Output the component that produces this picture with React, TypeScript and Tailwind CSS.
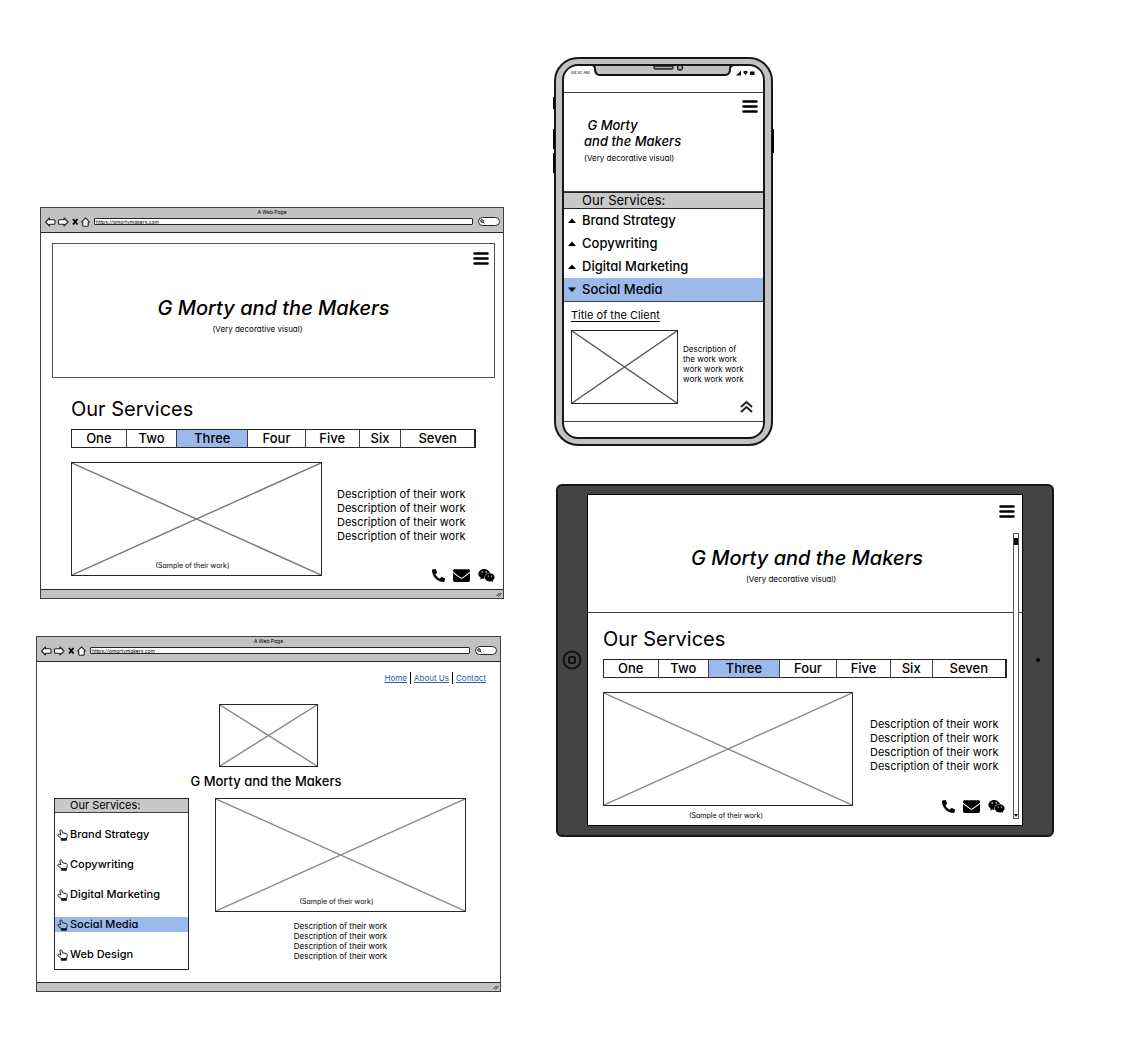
import type { ReactNode } from "react";
import { FaEnvelope, FaPhoneAlt, FaWeixin } from "react-icons/fa";

const services = ["Brand Strategy", "Copywriting", "Digital Marketing", "Social Media", "Web Design"];
const tabs = ["One", "Two", "Three", "Four", "Five", "Six", "Seven"];

function MenuButton() {
  return (
    <button type="button" aria-label="Menu" className="block">
      <svg width="16" height="13" viewBox="0 0 16 13" stroke="#000" strokeWidth="2.6" strokeLinecap="round">
        <path d="M1.5 1.5h13M1.5 6.5h13M1.5 11.5h13" />
      </svg>
    </button>
  );
}

function Placeholder({ className, line = "#777", children }: { className: string; line?: string; children?: ReactNode }) {
  return (
    <div className={`relative border border-neutral-800 ${className}`}>
      <svg className="block h-full w-full" viewBox="0 0 100 100" preserveAspectRatio="none" stroke={line} strokeWidth="1.4">
        <path d="M0 0L100 100M100 0L0 100" vectorEffect="non-scaling-stroke" />
      </svg>
      {children}
    </div>
  );
}

function Hand() {
  return (
    <svg width="11" height="12" viewBox="0 0 22 24" fill="none" stroke="#222" strokeWidth="2" strokeLinejoin="round" className="shrink-0">
      <path d="M7.500 12L5.800 4C5.500 1.500 9 1 9.800 3.200L11 7.500L18 9C20 9.600 20.800 10.700 20.500 12.500L19 19H8.500L1.800 13.500C0.600 11.500 2.500 9.800 4.600 10.800L7.500 12" />
      <path d="M8.500 19h10.500v3.500H8.500z" fill="#111" />
    </svg>
  );
}

function Browser({ className, children }: { className: string; children: ReactNode }) {
  return (
    <section className={`border border-neutral-700 bg-white ${className}`}>
      <header className="h-[25px] border-b border-neutral-800 bg-[#c2c2c2]">
        <p className="h-[9px] text-center text-[5px] leading-[8px]">A Web Page</p>
        <div className="flex h-[9px] items-center pr-[3px] pl-1">
          <svg width="46" height="10" viewBox="0 0 46 10" fill="#fff" stroke="#222" strokeWidth="1.1" strokeLinejoin="round" className="shrink-0">
            <path d="M0.600 5L4.500 1v1.800h4.500q1 0 1 1v2.400q0 1-1 1H4.500V9z" />
            <path d="M23 5L19 1v1.800h-4.500q-1 0-1 1v2.400q0 1 1 1H19V9z" />
            <path d="M28 2l4.500 5.500M32.500 2l-4.500 5.500" stroke="#000" strokeWidth="1.800" />
            <path d="M40.500 0.800L44.400 5h-1.200v3.200q0 1-1 1h-3.400q-1 0-1-1V5h-1.200z" />
          </svg>
          <input
            aria-label="Address"
            defaultValue="https://gmortymakers.com"
            className="ml-[3px] h-[7px] min-w-0 flex-1 rounded-[1px] border border-neutral-800 bg-white px-px text-[5px] leading-[5px]"
          />
          <label className="ml-[5px] flex h-[9px] w-[22px] shrink-0 items-center rounded-full border border-neutral-800 bg-white pl-px">
            <svg width="5" height="5" viewBox="0 0 5 5" fill="none" stroke="#111" strokeWidth="1" className="shrink-0">
              <circle cx="2" cy="2" r="1.300" />
              <path d="M3 3l1.500 1.500" />
            </svg>
            <input aria-label="Search" className="h-[5px] w-full min-w-0 text-[5px] outline-none" />
          </label>
        </div>
      </header>
      {children}
      <footer className="flex h-[9px] items-center justify-end border-t border-neutral-800 bg-[#c2c2c2] pr-px">
        <svg width="6" height="5" viewBox="0 0 6 5" stroke="#222" strokeWidth="1">
          <path d="M0.500 4l3-3M2.500 4.500l3-3.500" />
        </svg>
      </footer>
    </section>
  );
}

function HeroText() {
  return (
    <>
      <h1 className="text-center text-[20px] leading-7 font-medium italic">G Morty and the Makers</h1>
      <p className="mt-px pr-8 text-center text-[8px] leading-3">(Very decorative visual)</p>
    </>
  );
}

function ServiceTabs({ className }: { className: string }) {
  return (
    <nav
      aria-label="Services"
      className={`grid h-[19px] grid-cols-[55fr_51fr_71fr_58fr_54fr_42fr_73fr] border border-r-2 border-neutral-800 ${className}`}
    >
      {tabs.map((tab) => (
        <button
          key={tab}
          type="button"
          className={`border-r border-neutral-700 text-[13px] leading-[17px] font-medium last:border-r-0 ${tab === "Three" ? "bg-[#9cb9ec]" : "bg-white"}`}
        >
          {tab}
        </button>
      ))}
    </nav>
  );
}

function Description({ className }: { className: string }) {
  return (
    <div className={className}>
      {[0, 1, 2, 3].map((n) => (
        <p key={n}>Description of their work</p>
      ))}
    </div>
  );
}

function ContactIcons() {
  return (
    <div className="flex h-[14px] items-center justify-end gap-2">
      <a href="#phone" aria-label="Phone">
        <FaPhoneAlt size={13} />
      </a>
      <a href="#mail" aria-label="Email">
        <FaEnvelope size={17} />
      </a>
      <a href="#wechat" aria-label="WeChat">
        <FaWeixin size={17} />
      </a>
    </div>
  );
}

function DesktopTabs() {
  return (
    <Browser className="ml-1">
      <main>
        <div className="mt-[10px] mr-2 ml-[11px] border border-neutral-600 pt-[8px] pb-[42px]">
          <div className="mb-[29px] flex justify-end pr-[5px]">
            <MenuButton />
          </div>
          <HeroText />
        </div>
        <div className="pt-[17px] pr-2 pb-[7px] pl-[30px]">
          <h2 className="text-[20px] leading-7">Our Services</h2>
          <ServiceTabs className="mt-[6px] mr-[19px]" />
          <div className="mt-[14px] grid grid-cols-[251fr_158fr] gap-[15px]">
            <Placeholder className="h-[114px]">
              <p className="absolute inset-x-0 bottom-1 pr-2 text-center text-[7px] leading-[10px]">(Sample of their work)</p>
            </Placeholder>
            <div className="pt-[25px]">
              <Description className="text-[11px] leading-[14px] whitespace-nowrap" />
              <div className="mt-[25px]">
                <ContactIcons />
              </div>
            </div>
          </div>
        </div>
      </main>
    </Browser>
  );
}

function DesktopSidebar() {
  return (
    <Browser className="mt-[37px] mr-[3px]">
      <main className="pr-[14px] pb-[12px] pl-[17px]">
        <nav aria-label="Site" className="flex justify-end pt-[10px] text-[8px] leading-[12px] text-[#2a5caa]">
          <a href="#home" className="pr-[3px] underline">Home</a>
          <a href="#about" className="border-l border-black px-[3px] underline">About Us</a>
          <a href="#contact" className="border-l border-black pl-[3px] underline">Contact</a>
        </nav>
        <div className="mt-[20px] flex flex-col items-center pr-1">
          <Placeholder className="h-[63px] w-[99px]" line="#8a8a8a" />
          <h1 className="mt-[4px] pr-1 text-[13px] leading-5 font-medium">G Morty and the Makers</h1>
        </div>
        <div className="mt-[7px] grid grid-cols-[135fr_271fr] gap-[26px]">
          <aside className="border border-neutral-800 pb-[7px]">
            <h2 className="h-[14px] border-b border-neutral-700 bg-[#c8c8c8] pl-[15px] text-[11px] leading-[13px]">Our Services:</h2>
            <ul className="flex flex-col gap-[15px] pt-[14px]">
              {services.map((service) => (
                <li key={service} className={service === "Social Media" ? "bg-[#9cb9ec]" : ""}>
                  <button type="button" className="flex h-[15px] items-center gap-[2px] pl-[2px] text-[11px] leading-[15px] font-medium">
                    <Hand />
                    {service}
                  </button>
                </li>
              ))}
            </ul>
          </aside>
          <div className="pr-5">
            <Placeholder className="h-[114px]" line="#8a8a8a">
              <p className="absolute inset-x-0 bottom-1 pr-2 text-center text-[7px] leading-[10px]">(Sample of their work)</p>
            </Placeholder>
            <Description className="mt-[9px] text-center text-[8px] leading-[10px]" />
          </div>
        </div>
      </main>
    </Browser>
  );
}

function Phone() {
  return (
    <section className="relative w-[219px] rounded-[24px] border-2 border-neutral-900 bg-[#c2c2c2] px-[6px] pt-[5px] pb-[5px]">
      <div className="absolute top-[38px] -left-[3px] h-3 w-[2px] bg-black" />
      <div className="absolute top-[70px] -left-[3px] h-5 w-[2px] bg-black" />
      <div className="absolute top-[94px] -left-[3px] h-5 w-[2px] bg-black" />
      <div className="absolute top-[70px] -right-[3px] h-6 w-[2px] bg-black" />
      <div className="relative overflow-hidden rounded-[16px] border-2 border-neutral-900 bg-white">
        <div className="relative flex h-[26px] items-start justify-between pt-[4px] pr-[8px] pl-[7px]">
          <p className="text-[4px] leading-[6px]">09:52 AM</p>
          <svg width="19" height="6" viewBox="0 0 19 6" fill="#111">
            <path d="M0 5.500L5 0.500v5zM7 2q2.500-2.500 5 0L9.500 5zM14 1.500h4.500v3.500H14z" />
          </svg>
          <svg width="145" height="14" viewBox="0 0 145 14" className="absolute -top-[2px] left-[27px]" fill="#c2c2c2" stroke="#111" strokeWidth="2">
            <path d="M0 1Q4 1 4 5Q4 11 9 11H134Q139 11 139 5Q139 1 144 1" />
            <path d="M3 0H140" stroke="#c2c2c2" strokeWidth="3" />
          </svg>
          <svg width="32" height="8" viewBox="0 0 32 8" className="absolute -top-[2px] left-[89px]" fill="#aaa" stroke="#222" strokeWidth="1.300">
            <rect x="1" y="2" width="19" height="3" rx="1.500" />
            <circle cx="27" cy="3.500" r="2.500" />
          </svg>
        </div>
        <div className="border-y border-neutral-700 pt-[7px] pb-[27px]">
          <div className="flex justify-end pr-[5px]">
            <MenuButton />
          </div>
          <h1 className="pt-[4px] pl-[20px] text-[13px] leading-4 font-medium italic">
            &nbsp;G Morty
            <br />
            and the Makers
          </h1>
          <p className="pt-[3px] pl-[20px] text-[8px] leading-[12px]">(Very decorative visual)</p>
        </div>
        <h2 className="h-[17px] border-t border-b border-neutral-800 bg-[#c8c8c8] pl-[18px] text-[13px] leading-[15px]">Our Services:</h2>
        <ul className="border-b border-neutral-700">
          {services.slice(0, 4).map((service) => (
            <li key={service} className={service === "Social Media" ? "bg-[#9cb9ec]" : ""}>
              <button type="button" className="flex h-[23px] items-center gap-[6px] pl-1 text-[13px] font-medium">
                <svg width="8" height="5" viewBox="0 0 8 5">
                  <path d={service === "Social Media" ? "M0 0.500H8L4 5z" : "M0 5H8L4 0.500z"} />
                </svg>
                {service}
              </button>
            </li>
          ))}
        </ul>
        <div className="border-b border-neutral-700 pt-[6px] pr-[10px] pb-[8px] pl-[7px]">
          <h3 className="text-[11px] leading-[14px] underline underline-offset-2">Title of the Client</h3>
          <div className="mt-[8px] flex gap-[5px]">
            <Placeholder className="h-[74px] w-[107px]" line="#555" />
            <p className="pt-[14px] text-[8px] leading-[10px]">
              Description of
              <br />
              the work work
              <br />
              work work work
              <br />
              work work work
            </p>
          </div>
          <button type="button" aria-label="Back to top" className="-mt-[4px] ml-auto block">
            <svg width="13" height="13" viewBox="0 0 13 13" fill="none" stroke="#222" strokeWidth="2">
              <path d="M1 7l5.500-5L12 7M1 12l5.500-5L12 12" />
            </svg>
          </button>
        </div>
        <div className="h-[15px]" />
      </div>
    </section>
  );
}

function Tablet() {
  return (
    <section className="mt-[38px] ml-[2px] grid grid-cols-[29px_1fr_29px] items-center rounded-[6px] border-2 border-neutral-900 bg-[#444] pt-[8px] pb-[9px]">
      <svg width="20" height="20" viewBox="0 0 20 20" fill="none" stroke="#111" strokeWidth="2" className="ml-[4px]">
        <circle cx="10" cy="10" r="8.500" />
        <rect x="7" y="7" width="6" height="6" rx="1.500" />
      </svg>
      <main className="relative border border-black bg-white">
        <div className="border-b border-neutral-700 pt-[10px] pb-[27px] pl-1">
          <div className="mb-[26px] flex justify-end pr-[7px]">
            <MenuButton />
          </div>
          <HeroText />
        </div>
        <div className="pt-[12px] pr-[15px] pb-[4px] pl-[15px]">
          <h2 className="text-[20px] leading-7">Our Services</h2>
          <ServiceTabs className="mt-[6px]" />
          <div className="mt-[14px] grid grid-cols-[250fr_137fr] gap-[17px]">
            <div>
              <Placeholder className="h-[114px]" line="#8a8a8a" />
              <p className="mt-[5px] pr-1 text-center text-[7px] leading-[10px]">(Sample of their work)</p>
            </div>
            <div className="pt-[25px]">
              <Description className="text-[11px] leading-[14px] whitespace-nowrap" />
              <div className="mt-[26px] pr-[2px]">
                <ContactIcons />
              </div>
            </div>
          </div>
        </div>
        <div className="absolute top-[38px] right-[3px] bottom-[6px] flex w-[6px] flex-col border border-neutral-600 bg-white">
          <div className="mt-[4px] h-[7px] bg-black" />
          <svg width="4" height="4" viewBox="0 0 4 4" className="mt-auto">
            <path d="M0 0H4L2 3z" />
          </svg>
        </div>
      </main>
      <div className="mx-auto h-1 w-1 rounded-full bg-black" />
    </section>
  );
}

export default function App() {
  return (
    <div className="grid min-h-screen grid-cols-[468fr_500fr] items-start gap-[50px] bg-white pr-[90px] pl-[36px] font-['Inter',sans-serif] text-black [font-feature-settings:'cv11']">
      <div className="pt-[207px]">
        <DesktopTabs />
        <DesktopSidebar />
      </div>
      <div className="pt-[57px]">
        <Phone />
        <Tablet />
      </div>
    </div>
  );
}
